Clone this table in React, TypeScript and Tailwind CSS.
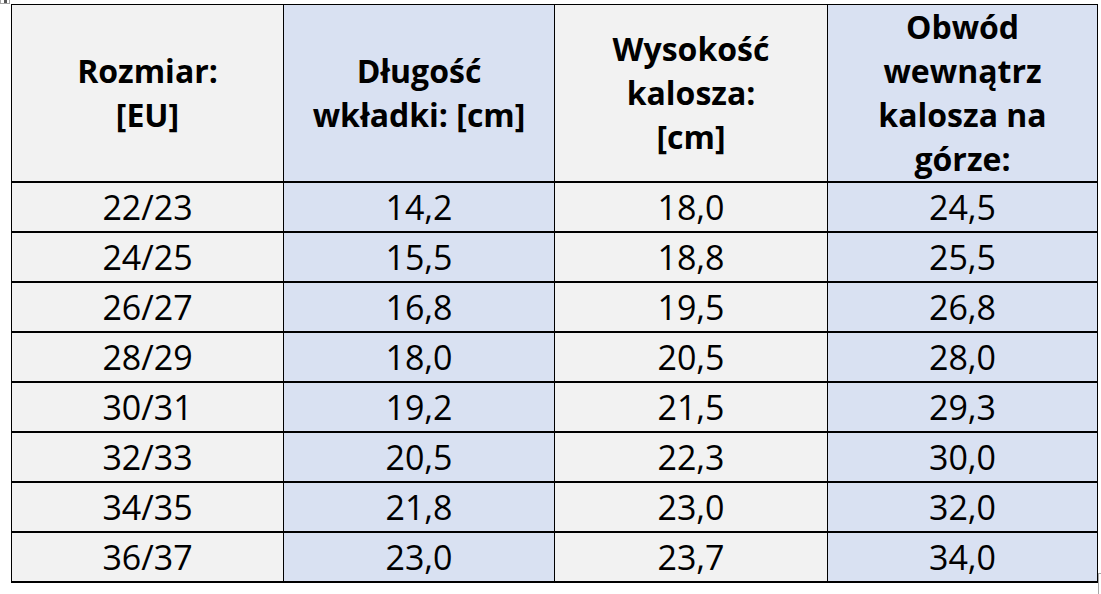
import React from "react";

const rows: [string, string, string, string][] = [
  ["22/23", "14,2", "18,0", "24,5"],
  ["24/25", "15,5", "18,8", "25,5"],
  ["26/27", "16,8", "19,5", "26,8"],
  ["28/29", "18,0", "20,5", "28,0"],
  ["30/31", "19,2", "21,5", "29,3"],
  ["32/33", "20,5", "22,3", "30,0"],
  ["34/35", "21,8", "23,0", "32,0"],
  ["36/37", "23,0", "23,7", "34,0"],
];

const headers: string[][] = [
  ["Rozmiar:", "[EU]"],
  ["Długość", "wkładki: [cm]"],
  ["Wysokość", "kalosza:", "[cm]"],
  ["Obwód", "wewnątrz", "kalosza na", "górze:"],
];

const colBg = ["bg-[#f2f2f2]", "bg-[#d9e1f2]", "bg-[#f2f2f2]", "bg-[#d9e1f2]"];

export default function App() {
  return (
    <div className="relative w-[1101px] h-[594px] bg-white overflow-hidden text-black [font-family:'Open_Sans',sans-serif]">
      {/* word table move handle */}
      <div className="absolute left-0 top-0 w-[10px] h-[4px] border-x border-b border-[#a6a6a6] bg-white flex justify-center">
        <div className="w-[3px] h-[3px] bg-[#555]" />
      </div>

      <div className="ml-[11px] mt-[4px] w-[1087px] border-l border-t border-black grid grid-cols-[272px_271px_273px_270px]">
        {headers.map((lines, i) => (
          <div
            key={i}
            className={`${colBg[i]} h-[178px] border-r border-b-2 border-black flex flex-col items-center justify-center font-bold text-[32px] leading-[44px] text-center`}
          >
            {lines.map((l) => (
              <span key={l}>{l}</span>
            ))}
          </div>
        ))}
        {rows.map((r) =>
          r.map((v, i) => (
            <div
              key={r[0] + i}
              className={`${colBg[i]} h-[50px] border-r border-b-2 border-black flex items-center justify-center text-[34px] leading-none`}
            >
              {v}
            </div>
          ))
        )}
      </div>

      {/* resize handle */}
      <div className="absolute left-[1098px] top-[573px] w-[4px] h-[21px] border-l border-t border-[#a6a6a6]" />
    </div>
  );
}
